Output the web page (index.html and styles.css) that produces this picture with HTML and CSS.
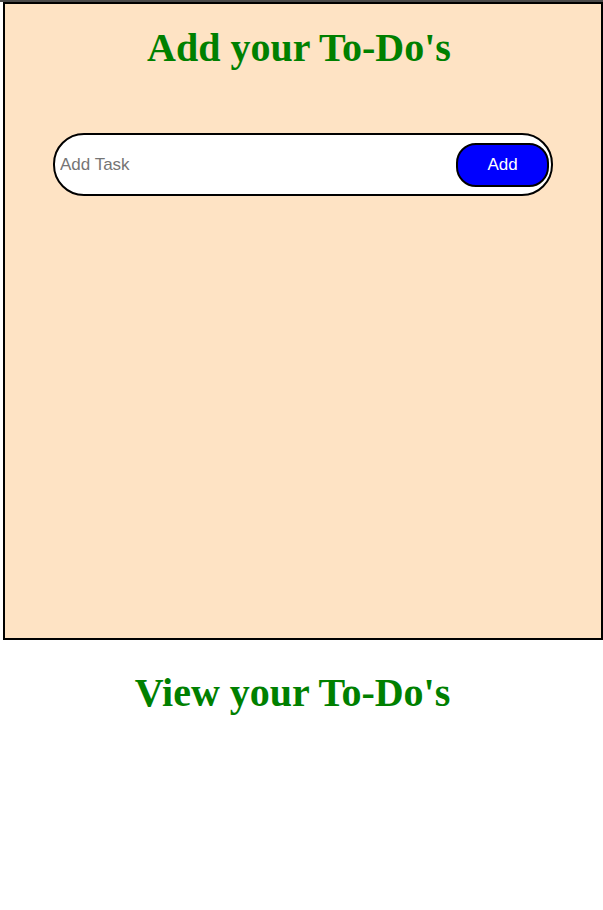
FILE: index.html
```html
<!DOCTYPE html>
<html lang="en">
<head>
<meta charset="utf-8">
<title>To-Do</title>
<link rel="stylesheet" href="styles.css">
</head>
<body>
<div class="topbar"></div>
<div class="panel">
  <h1 class="title title-add">Add your To-Do's</h1>
  <div class="task-form">
    <input class="task-input" type="text" placeholder="Add Task">
    <button class="add-btn" type="button">Add</button>
  </div>
</div>
<h1 class="title title-view">View your To-Do's</h1>
</body>
</html>
```
FILE: styles.css
```css
html, body {
  margin: 0;
  padding: 0;
  background: #ffffff;
}
body {
  width: 603px;
  font-family: "Liberation Serif", "Times New Roman", serif;
}
.topbar {
  height: 2px;
  background: #4a4a4a;
}
.panel {
  margin-left: 3px;
  width: 596px;
  height: 634px;
  border: 2px solid #000;
  background: #fee3c4;
  display: flex;
  flex-direction: column;
  align-items: center;
}
.title {
  font-family: "Liberation Serif", "Times New Roman", serif;
  font-weight: bold;
  font-size: 40px;
  line-height: normal;
  color: #008000;
  text-align: center;
  margin: 0;
}
.title-add {
  align-self: stretch;
  margin-top: 20px;
  padding-right: 8px;
}
.title-view {
  margin-top: 29px;
  padding-right: 18px;
}
.task-form {
  margin-top: 62px;
  width: 494px;
  height: 59px;
  border: 2px solid #000;
  border-radius: 31px;
  background: #fff;
  display: flex;
  align-items: center;
  padding-right: 2px;
  box-sizing: content-box;
}
.task-input {
  flex: 1;
  min-width: 0;
  border: none;
  outline: none;
  background: transparent;
  font-family: "Liberation Sans", Arial, sans-serif;
  font-size: 17px;
  padding: 0 0 0 5px;
  color: #000;
}
.task-input::placeholder {
  color: #757575;
}
.add-btn {
  width: 93px;
  height: 44px;
  border: 2px solid #000;
  border-radius: 20px;
  background: #0000ff;
  color: #fff;
  font-family: "Liberation Sans", Arial, sans-serif;
  font-size: 17px;
  padding: 0;
  box-sizing: border-box;
}
```
